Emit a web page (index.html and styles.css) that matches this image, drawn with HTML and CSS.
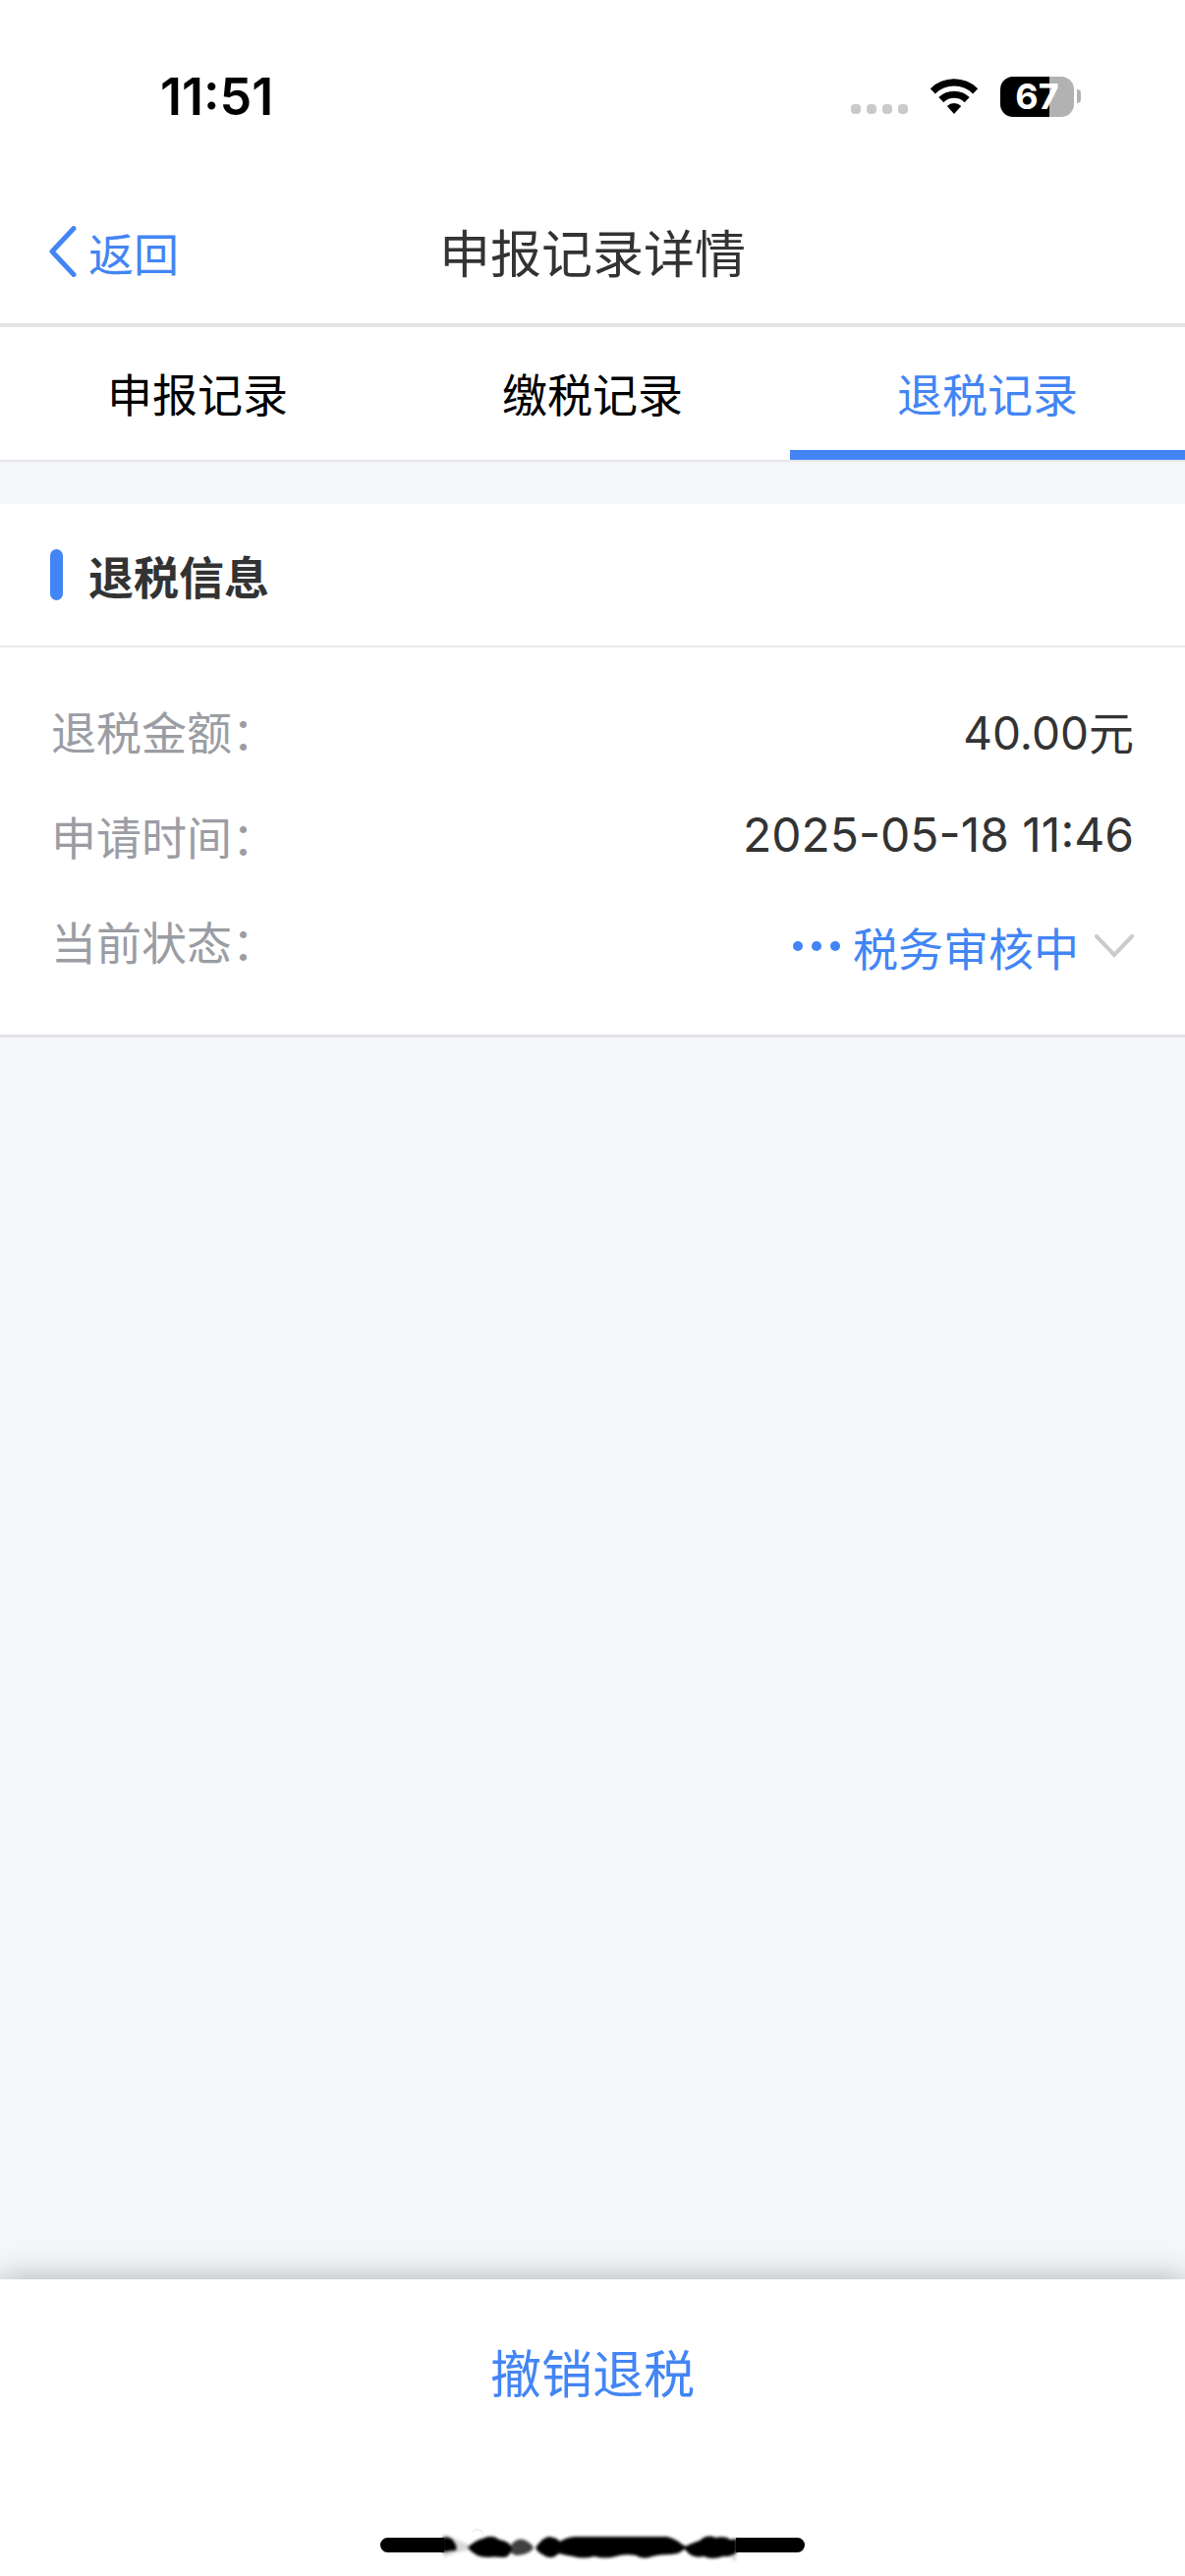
FILE: index.html
```html
<!DOCTYPE html>
<html lang="zh-CN">
<head>
    <meta charset="UTF-8">
    <meta name="viewport" content="width=device-width, initial-scale=1.0">
    <title>申报记录详情</title>
    <link rel="stylesheet" href="styles.css">
</head>
<body>
    <!-- Status bar -->
    <div class="status-bar">
        <span class="time">11:51</span>
        <div class="status-icons">
            <div class="signal"><i></i><i></i><i></i><i></i></div>
            <svg class="wifi" viewBox="0 0 50 38" width="50" height="38">
                <path d="M0.8 11.2 A34.5 34.5 0 0 1 49.2 11.2 L44.2 16.4 A27.3 27.3 0 0 0 5.8 16.4 Z"/>
                <path d="M9.3 20.1 A22.3 22.3 0 0 1 40.7 20.1 L35.7 25.2 A15.1 15.1 0 0 0 14.3 25.2 Z"/>
                <path d="M17.8 29 A10.3 10.3 0 0 1 32.2 29 L25 37 Z"/>
            </svg>
            <div class="battery">
                <span class="battery-level">67</span>
                <span class="battery-cap"></span>
            </div>
        </div>
    </div>

    <!-- Header -->
    <header class="nav-bar">
        <a class="back" href="#">
            <svg viewBox="0 0 28 52" width="28" height="52">
                <path d="M25 2.5 L3 26 L25 49.5"/>
            </svg>
            返回
        </a>
        <h1>申报记录详情</h1>
    </header>

    <nav class="tabs">
        <a class="tab" href="#">申报记录</a>
        <a class="tab" href="#">缴税记录</a>
        <a class="tab active" href="#">退税记录</a>
    </nav>

    <!-- Refund info -->
    <main>
        <section class="card">
            <h2>退税信息</h2>
            <dl class="info">
                <div class="row">
                    <dt>退税金额：</dt>
                    <dd>40.00元</dd>
                </div>
                <div class="row">
                    <dt>申请时间：</dt>
                    <dd class="date">2025-05-18 11:46</dd>
                </div>
                <div class="row">
                    <dt>当前状态：</dt>
                    <dd>
                        <button class="state" type="button">
                            <svg class="dots" viewBox="0 0 50 12" width="50" height="12">
                                <circle cx="6" cy="6" r="5"/>
                                <circle cx="25" cy="6" r="5"/>
                                <circle cx="44" cy="6" r="5"/>
                            </svg>
                            <span>税务审核中</span>
                            <svg class="arrow" viewBox="0 0 40 24" width="40" height="24">
                                <path d="M2 2 L20 21 L38 2"/>
                            </svg>
                        </button>
                    </dd>
                </div>
            </dl>
        </section>
    </main>

    <!-- Bottom action -->
    <footer class="bottom-bar">
        <button class="revoke" type="button">撤销退税</button>
        <svg class="home-bar" viewBox="0 0 432 40" width="432" height="40">
            <defs>
                <filter id="soft" x="-10%" y="-50%" width="120%" height="200%">
                    <feGaussianBlur stdDeviation="1.5"/>
                </filter>
            </defs>
            <path d="M7.5 12 H65 V27 H7.5 A7.5 7.5 0 0 1 7.5 12 Z"/>
            <path d="M362 12 H424.5 A7.5 7.5 0 0 1 424.5 27 H362 Z"/>
            <g filter="url(#soft)">
                <path class="haze" d="M65 8 L78 14 L92 20 L92 24 L78 27 L65 32 Z"/>
                <path d="M63 12 Q72 10 75 16 Q79 22 77 25 Q72 25 63 27 Z"/>
                <path d="M89 22 Q96 15 104 13 Q114 8 121 14 Q132 16 134 22 Q132 33 124 32 Q115 31 110 32 Q96 32 89 22 Z"/>
                <path class="faded" d="M134 18 Q142 10 150 16 Q156 20 156 23 Q150 30 138 30 L132 27 Z"/>
                <path d="M158 22 Q166 11 172 11 Q180 12 183 16 Q190 11 200 11 L292 11 Q302 14 306 18 L311 21 Q308 28 296 29 Q284 29 277 31 Q268 35 260 30 Q248 28 240 31 Q228 34 218 31 Q206 34 196 31 Q188 30 182 28 Q173 36 165 29 Q160 27 158 22 Z"/>
                <path d="M308 22 Q318 17 325 15 Q333 8 341 12 Q352 10 356 14 L363 13 V27 Q356 32 349 31 Q338 35 329 31 Q321 33 315 29 Z"/>
                <path class="haze" d="M352 27 H362 V37 Z"/>
            </g>
            <path class="trace" d="M94 6 Q97 2 103 5 L105 8"/>
        </svg>
    </footer>
</body>
</html>
```

FILE: styles.css
```css
* {
    box-sizing: border-box;
}

body {
    font-family: Inter, "Noto Sans CJK SC", sans-serif;
    font-size: 46px;
    margin: 0;
    background-color: #f4f6fa;
    color: #333;
    display: flex;
    flex-direction: column;
    min-height: 100vh;
}

h1, h2, dl, dd {
    margin: 0;
}

a {
    text-decoration: none;
}

button {
    padding: 0;
    border: none;
    background: none;
    font: inherit;
    color: #4385f4;
    cursor: pointer;
}

/* Status bar */
.status-bar {
    display: flex;
    justify-content: space-between;
    align-items: center;
    height: 186px;
    padding: 10px 106px 0 163px;
    background: #fff;
    color: #000;
}

.time {
    font-size: 52px;
    font-weight: 600;
}

.status-icons {
    display: flex;
    align-items: center;
    gap: 22px;
}

.signal {
    display: flex;
    gap: 6px;
    margin-top: 26px;
}

.signal i {
    width: 10px;
    height: 10px;
    border-radius: 4px;
    background: #cacaca;
}

.battery {
    display: flex;
    align-items: center;
    gap: 3px;
}

.battery-level {
    width: 75px;
    height: 41px;
    border-radius: 13px;
    background: linear-gradient(to right, #000 67%, #b2b2b2 67%);
    color: #fff;
    font-size: 36px;
    font-weight: 700;
    line-height: 41px;
    text-align: center;
}

.battery-cap {
    width: 4px;
    height: 14px;
    border-radius: 0 4px 4px 0;
    background: #b2b2b2;
}

/* Header */
.nav-bar {
    display: grid;
    grid-template-columns: 1fr auto 1fr;
    align-items: center;
    height: 147px;
    padding: 0 50px 4px;
    background: #fff;
    border-bottom: 4px solid #e3e3e3;
}

.nav-bar h1 {
    font-size: 52px;
    font-weight: 400;
}

.back {
    display: flex;
    align-items: center;
    gap: 12px;
    color: #4385f4;
}

.back path {
    fill: none;
    stroke: #4385f4;
    stroke-width: 5;
    stroke-linecap: round;
    stroke-linejoin: round;
}

/* Tabs */
.tabs {
    display: flex;
    background: #fff;
    border-bottom: 2px solid #e5e6e8;
}

.tab {
    flex: 1;
    height: 135px;
    padding-top: 4px;
    border-bottom: 10px solid transparent;
    line-height: 130px;
    text-align: center;
    color: #000;
}

.tab.active {
    color: #4385f4;
    border-bottom-color: #4385f4;
}

/* Refund info */
main {
    flex: 1;
    padding-top: 43px;
}

.card {
    background: #fff;
    border-bottom: 3px solid #e3e4e8;
}

.card h2 {
    display: flex;
    align-items: center;
    gap: 26px;
    height: 146px;
    padding: 0 51px;
    border-bottom: 2px solid #ebebeb;
    font-size: 46px;
    font-weight: 700;
}

.card h2::before {
    content: "";
    width: 13px;
    height: 52px;
    border-radius: 7px;
    background: #4385f4;
}

.info {
    padding: 30px 52px 43px;
}

.row {
    display: flex;
    justify-content: space-between;
    align-items: center;
    height: 107px;
}

.row dt {
    color: #9b9da4;
}

.row .date {
    font-size: 48px;
}

.state {
    display: flex;
    align-items: center;
    gap: 12px;
    padding-top: 12px;
}

.dots {
    fill: #4385f4;
}

.arrow {
    margin-left: 4px;
    fill: none;
    stroke: #ccc;
    stroke-width: 4;
    stroke-linecap: round;
}

/* Bottom action */
.bottom-bar {
    display: flex;
    flex-direction: column;
    align-items: center;
    justify-content: space-between;
    height: 302px;
    padding: 52px 0 11px;
    background: #fff;
    box-shadow: 0 0 30px rgba(0, 0, 0, 0.3);
}

.revoke {
    width: 100%;
    font-size: 52px;
    line-height: 92px;
}

.faded {
    opacity: 0.75;
}

.haze {
    opacity: 0.15;
}

.trace {
    fill: none;
    stroke: #ddd;
}
```
